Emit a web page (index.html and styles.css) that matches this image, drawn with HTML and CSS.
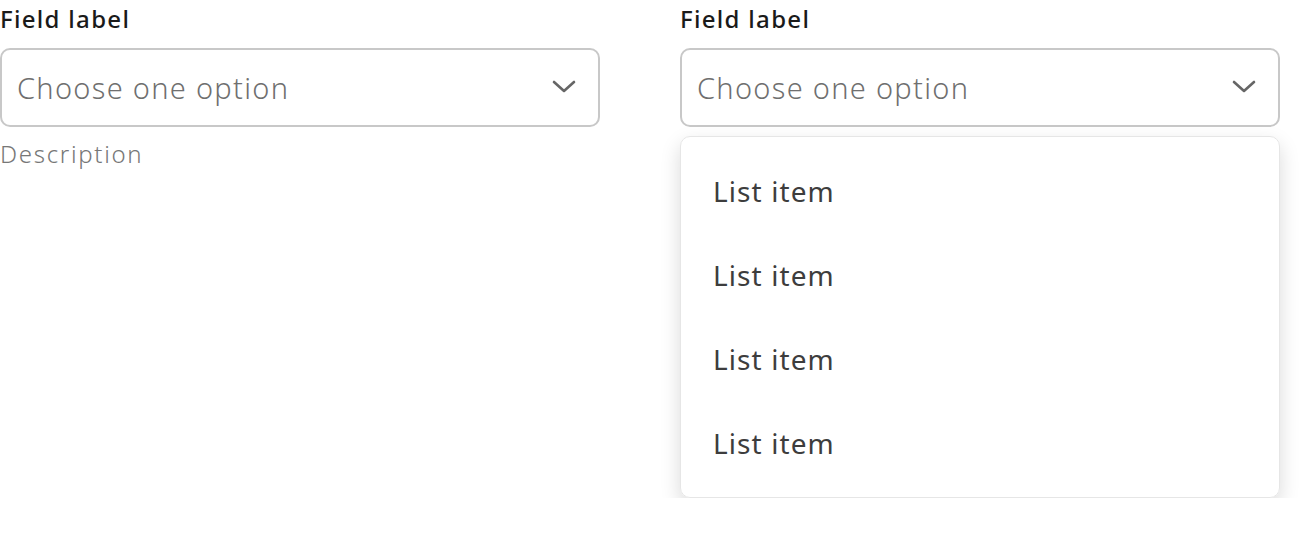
FILE: index.html
```html
<!DOCTYPE html>
<html lang="en">
<head>
    <meta charset="UTF-8">
    <title>Select fields</title>
    <link rel="stylesheet" href="styles.css">
</head>
<body>
    <div class="fields">
        <div class="field">
            <label class="label">Field label</label>
            <div class="select">
                <span class="placeholder">Choose one option</span>
                <svg class="chevron" width="24" height="24" viewBox="0 0 24 24"><path d="M2 6l10 9 10-9" fill="none" stroke="#666" stroke-width="2.6" stroke-linecap="round" stroke-linejoin="round"/></svg>
            </div>
            <div class="description">Description</div>
        </div>

        <div class="field">
            <label class="label">Field label</label>
            <div class="select">
                <span class="placeholder">Choose one option</span>
                <svg class="chevron" width="24" height="24" viewBox="0 0 24 24"><path d="M2 6l10 9 10-9" fill="none" stroke="#666" stroke-width="2.6" stroke-linecap="round" stroke-linejoin="round"/></svg>
            </div>
            <ul class="menu">
                <li>List item</li>
                <li>List item</li>
                <li>List item</li>
                <li>List item</li>
            </ul>
        </div>
    </div>
</body>
</html>
```

FILE: styles.css
```css
body {
    margin: 0;
    font-family: "Noto Sans", Lato, sans-serif;
    background: #fff;
}
.fields {
    display: flex;
    gap: 80px;
    padding-top: 3px;
}
.field {
    width: 600px;
    display: flex;
    flex-direction: column;
}
.label {
    font-size: 24px;
    line-height: 32px;
    font-weight: 500;
    letter-spacing: 1.3px;
    color: #1a1a1a;
    margin-bottom: 13px;
}
.select {
    height: 79px;
    box-sizing: border-box;
    border: 2px solid #c8c8c8;
    border-radius: 10px;
    display: flex;
    align-items: center;
    justify-content: space-between;
    padding: 0 22px 0 15px;
}
.placeholder {
    font-size: 29px;
    font-weight: 300;
    letter-spacing: 1.3px;
    color: #6f6f6f;
}
.chevron {
    display: block;
}
.description {
    margin-top: 10px;
    font-size: 24px;
    font-weight: 300;
    letter-spacing: 1.7px;
    color: #777;
}
.menu {
    list-style: none;
    margin: 9px 0 0;
    padding: 12px 0;
    border: 1px solid #e6e6e6;
    border-radius: 10px;
    box-shadow: 0 8px 20px rgba(0, 0, 0, 0.15);
}
.menu li {
    height: 84px;
    line-height: 84px;
    padding-left: 32px;
    font-size: 28px;
    font-weight: 400;
    letter-spacing: 1.1px;
    color: #3d3d3d;
}
```
